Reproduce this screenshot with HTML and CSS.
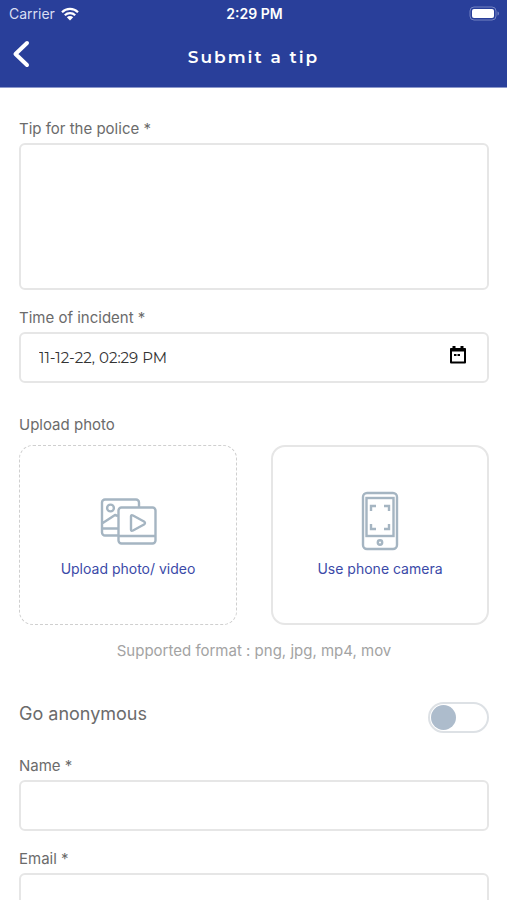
FILE: index.html
```html
<!DOCTYPE html>
<html lang="en">

<head>
	<meta charset="utf-8">
	<meta name="viewport" content="width=device-width, initial-scale=1">
	<title>Submit a tip</title>
	<link rel="stylesheet" href="styles.css">
</head>

<body>
	<header class="header">
		<div class="status-bar">
			<div class="carrier">
				<span>Carrier</span>
				<svg class="wifi" viewBox="0 0 18 14" width="18" height="14">
					<path d="M1 5.2a11.4 11.4 0 0 1 16 0M3.8 8.2a7.4 7.4 0 0 1 10.4 0" fill="none" stroke="#fff" stroke-width="2.2"/>
					<path d="M9 13.6L5.8 10.3a4.5 4.5 0 0 1 6.4 0z" fill="#fff"/>
				</svg>
			</div>
			<span class="clock">2:29 PM</span>
			<svg class="battery" viewBox="0 0 31 15" width="31" height="15">
				<rect x="1" y="1" width="26" height="13" rx="4" fill="none" stroke="#7483c2"/>
				<rect x="3" y="3" width="22" height="9" rx="2" fill="#fff"/>
				<path d="M28.5 5.5c2 .6 2 3.4 0 4z" fill="#7483c2"/>
			</svg>
		</div>
		<nav class="nav-bar">
			<a class="back" href="#" aria-label="Back">
				<svg viewBox="0 0 18 28" width="18" height="28">
					<path d="M15 3L3.5 14L15 25" fill="none" stroke="#fff" stroke-width="4" stroke-linecap="round" stroke-linejoin="round"/>
				</svg>
			</a>
			<h1 class="title">Submit a tip</h1>
		</nav>
	</header>

	<main class="content">
		<form>
			<div class="field">
				<label class="label" for="tip">Tip for the police *</label>
				<textarea class="input textarea" id="tip" required></textarea>
			</div>
			<div class="field">
				<label class="label" for="time">Time of incident *</label>
				<div class="date">
					<input class="input date-input" id="time" type="text" value="11-12-22, 02:29 PM" required>
					<svg class="calendar" viewBox="0 0 18 18" width="18" height="18">
						<path d="M2 3h14v13.5H2z" fill="none" stroke="#000" stroke-width="2" stroke-linejoin="round"/>
						<path d="M1.5 2.5h15v3h-15zM3.5 0h3v3h-3zM11.5 0h3v3h-3zM5 8h2.5v2H5zM8.5 8H11v2H8.5z"/>
					</svg>
				</div>
			</div>

			<section class="upload">
				<h2 class="label">Upload photo</h2>
				<div class="cards">
					<button class="card dashed" type="button">
						<svg viewBox="-1 0 58 60" width="58" height="60" fill="none" stroke="#a5b5c2" stroke-width="2.4" stroke-linejoin="round">
							<path d="M18 44.5H5a3 3 0 0 1-3-3v-30a3 3 0 0 1 3-3h31a3 3 0 0 1 3 3v5M2 37.5h16M2 32.500l13-8.500 3 1"/>
							<circle cx="10.5" cy="17" r="3.4"/>
							<rect x="18.5" y="16.5" width="37" height="36" rx="3"/>
							<path d="M18.5 45h37M31 25.5v13q0 2 2 1l11-6q2-1.500 0-3l-11-6q-2-1-2 1z"/>
						</svg>
						<span>Upload photo/ video</span>
					</button>
					<button class="card" type="button">
						<svg viewBox="0 0 38 60" width="38" height="60" fill="none" stroke="#a5b5c2" stroke-width="2.4">
							<rect x="2" y="2" width="34" height="56" rx="4"/>
							<rect x="5.5" y="7" width="27" height="38"/>
							<path d="M10 20v-5h5M23 15h5v5M28 33v5h-5M15 38h-5v-5"/>
							<circle cx="19" cy="51.5" r="2.2"/>
						</svg>
						<span>Use phone camera</span>
					</button>
				</div>
				<p class="hint">Supported format : png, jpg, mp4, mov</p>
			</section>

			<div class="anonymous">
				<label for="anonymous">Go anonymous</label>
				<input class="switch" id="anonymous" type="checkbox" role="switch">
			</div>

			<div class="field">
				<label class="label" for="name">Name *</label>
				<input class="input" id="name" type="text" required>
			</div>
			<div class="field">
				<label class="label" for="email">Email *</label>
				<input class="input" id="email" type="email" required>
			</div>
		</form>
	</main>
</body>

</html>
```

FILE: styles.css
```css
* {
	margin: 0;
	padding: 0;
	box-sizing: border-box;
}

body {
	display: flex;
	flex-direction: column;
	height: 100vh;
	background: #fff;
	color: #6b6b6b;
	font-family: Inter, "Liberation Sans", sans-serif;
	font-size: 15px;
	line-height: 24px;
}

.header {
	flex-shrink: 0;
	background: #293f9a;
	border-bottom: 1px solid #8c98cb;
	color: #fff;
}

.status-bar {
	display: grid;
	grid-template-columns: 1fr auto 1fr;
	align-items: center;
	height: 27px;
	padding: 0 7px 0 9px;
}

.carrier {
	display: flex;
	align-items: center;
	gap: 6px;
	color: #d9def2;
	font-size: 14px;
}

.clock {
	font-weight: 600;
	font-size: 14px;
}

.battery {
	justify-self: end;
}

.nav-bar {
	display: grid;
	grid-template-columns: 1fr auto 1fr;
	align-items: start;
	height: 60px;
	padding: 13px 12px 0;
}

.back {
	display: flex;
}

.title {
	font-family: Montserrat, Inter, sans-serif;
	font-size: 17px;
	font-weight: 600;
	line-height: 34px;
	letter-spacing: 2px;
}

.content {
	flex: 1;
	overflow-y: auto;
	scrollbar-width: none;
	padding: 29px 18px 28px 19px;
}

.field {
	margin-bottom: 16px;
}

.label {
	display: block;
	margin-bottom: 2px;
	font-size: 15px;
	font-weight: 400;
}

.input {
	display: block;
	width: 100%;
	height: 51px;
	padding: 0 20px;
	background: #fff;
	border: 2px solid #e6e6e6;
	border-radius: 6px;
	color: #333;
	font: inherit;
}

.textarea {
	height: 147px;
	padding: 12px 20px;
	resize: none;
}

.date {
	position: relative;
}

.date-input {
	padding: 0 56px 0 18px;
	font-family: Montserrat, Lato, sans-serif;
}

.calendar {
	position: absolute;
	top: 14px;
	right: 22px;
}

.upload {
	margin-top: 30px;
}

.cards {
	display: grid;
	grid-template-columns: 1fr 1fr;
	gap: 34px;
	margin-top: 8px;
}

.card {
	display: flex;
	flex-direction: column;
	align-items: center;
	justify-content: center;
	gap: 6px;
	height: 180px;
	padding-top: 2px;
	background: #fff;
	border: 2px solid #e6e6e6;
	border-radius: 14px;
	color: #3b4aa8;
	font: inherit;
	font-size: 14px;
}
.card.dashed { border: 1px dashed #cfcfcf; }

.hint {
	margin-top: 14px;
	color: #a3a3a3;
	text-align: center;
}

.anonymous {
	display: flex;
	align-items: flex-start;
	justify-content: space-between;
	margin: 39px 0 21px;
	font-size: 18px;
}

.switch {
	appearance: none;
	width: 61px;
	height: 31px;
	padding: 1px;
	background: #fff;
	border: 2px solid #dde1e5;
	border-radius: 16px;
}
.switch::before {
	content: "";
	display: block;
	width: 25px;
	height: 25px;
	border-radius: 50%;
	background: #adbccc;
}
.switch:checked::before { margin-left: auto; }
```
